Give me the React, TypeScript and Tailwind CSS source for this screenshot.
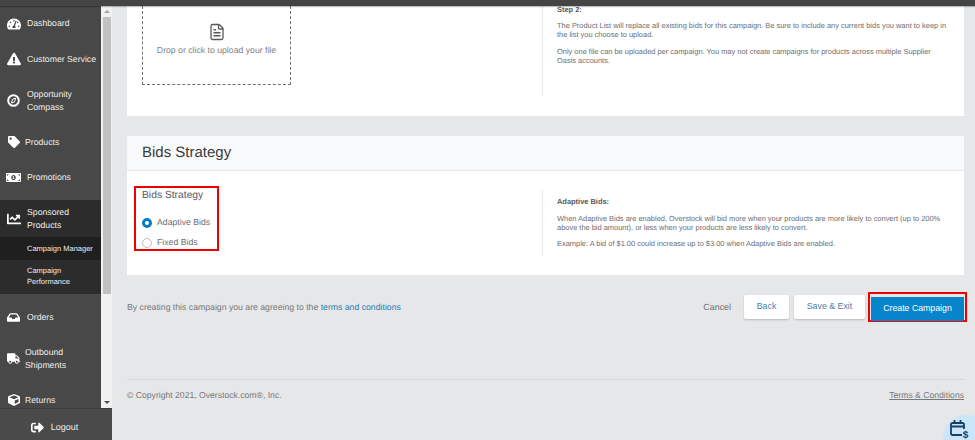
import React from "react";
import { FaTachometerAlt, FaExclamationTriangle, FaTag, FaMoneyBillAlt, FaChartLine, FaInbox, FaTruck, FaCube, FaSignOutAlt } from "react-icons/fa";
import { FileText } from "lucide-react";

function CompassIcon() {
  return (
    <svg width="13" height="13" viewBox="0 0 13 13" fill="none">
      <circle cx="6.5" cy="6.5" r="5.3" stroke="white" strokeWidth="2" />
      <path d="M8.6 4.2 7.6 7.8 4.5 9 5.4 5.3Z" stroke="white" strokeWidth="1" />
    </svg>
  );
}

function NavItem({ icon, label, h, gap = "gap-[6px]", pl = "pl-[6px]" }: { icon: React.ReactNode; label: React.ReactNode; h: string; gap?: string; pl?: string }) {
  return (
    <div className={`flex items-center ${h} ${gap} ${pl} whitespace-nowrap text-[8.7px] leading-[12.5px] text-[#eeeeee]`}>
      <span className="flex w-[15px] shrink-0 justify-center text-white">{icon}</span>
      <span>{label}</span>
    </div>
  );
}

function Sidebar() {
  return (
    <aside className="flex w-[112px] shrink-0 flex-col bg-[#4a4a4a]">
      <div className="flex h-[402px] min-h-0">
        <nav className="w-[101px] overflow-hidden bg-[#484848]">
          <NavItem h="h-[35px]" icon={<FaTachometerAlt size={14} />} label="Dashboard" />
          <NavItem h="h-[36px]" icon={<FaExclamationTriangle size={14} />} label="Customer Service" />
          <NavItem h="h-[47px]" icon={<CompassIcon />} label={<>Opportunity<br />Compass</>} />
          <NavItem h="h-[36px]" gap="gap-[4px]" icon={<FaTag size={12} />} label="Products" />
          <NavItem h="h-[40px] pb-[6px]" icon={<FaMoneyBillAlt size={15} />} label="Promotions" />
          <div className="h-[94px] bg-[#2c2c2c]">
            <NavItem h="h-[37px]" icon={<FaChartLine size={14} />} label={<>Sponsored<br />Products</>} />
            <div className="flex h-[23px] items-center whitespace-nowrap bg-[#1f1f1f] pl-[27px] text-[7.5px] text-[#eeeeee]">Campaign Manager</div>
            <div className="pl-[27px] pt-[6px] text-[7.5px] leading-[10.5px] text-[#eeeeee]">Campaign<br />Performance</div>
          </div>
          <NavItem h="h-[46px]" icon={<FaInbox size={13} />} label="Orders" />
          <NavItem h="h-[37px]" gap="gap-[4px]" icon={<FaTruck size={13} />} label={<>Outbound<br />Shipments</>} />
          <NavItem h="h-[46px]" gap="gap-[4px]" icon={<FaCube size={12} />} label="Returns" />
        </nav>
        <div className="flex w-[11px] flex-col items-center bg-[#f1f1f1]">
          <span className="mt-[4px] h-0 w-0 border-x-[3px] border-b-[3px] border-x-transparent border-b-[#a3a3a3]" />
          <div className="mt-[4px] h-[277px] w-[8px] bg-[#c1c1c1]" />
          <span className="mb-[4px] mt-auto h-0 w-0 border-x-[3px] border-t-[3px] border-x-transparent border-t-[#505050]" />
        </div>
      </div>
      <div className="flex flex-1 items-center justify-center gap-[7px] border-t border-[#3d3d3d] pr-[3px] pt-[6px] text-[9px] text-[#eeeeee]">
        <FaSignOutAlt size={13} className="text-white" />
        <span>Logout</span>
      </div>
    </aside>
  );
}

function Main() {
  return (
    <main className="relative min-w-0 flex-1 overflow-hidden bg-[#e6e7e8] pl-[15px] pr-[11px]">
      <section className="flex h-[110px] bg-white pl-[15px]">
        <div className="flex h-[79px] w-[149px] flex-col items-center border-x border-b border-dashed border-[#6d6e71] pt-[17px]">
          <FileText size={18} strokeWidth={1.7} className="text-[#58595b]" />
          <p className="mt-[3px] text-[8.7px] leading-[12px] text-[#808285]">Drop or click to upload your file</p>
        </div>
        <div className="ml-[251px] h-[90px] w-[408px] border-l border-[#e6e7e8] pl-[14px] text-[7.45px] leading-[9.5px] text-[#6d6e71]">
          <p className="-mt-px font-bold text-[#58595b]">Step 2:</p>
          <p className="mt-[6px]">The Product List will replace all existing bids for this campaign. Be sure to include any current bids you want to keep in the list you choose to upload.</p>
          <p className="mt-[7px]">Only one file can be uploaded per campaign. You may not create campaigns for products across multiple Supplier Oasis accounts.</p>
        </div>
      </section>

      <section className="mt-[20px] h-[139px] bg-white">
        <h2 className="flex h-[35px] items-center border-b border-[#e6e7e8] bg-[#f8f9fa] pl-[15px] pt-px text-[15px] text-[#3a3b3d]">Bids Strategy</h2>
        <div className="flex pl-[7px] pt-[15px]">
          <div className="h-[65px] w-[85px] border-2 border-[#f00000] pl-[6px] pt-px text-[8.7px] text-[#6d6e71]">
            <p className="text-[10.3px] leading-[14px] text-[#58595b]">Bids Strategy</p>
            <div className="mt-[13px] flex items-center gap-[5px]">
              <span className="h-[10px] w-[10px] rounded-full border-[3px] border-[#0b7cc4] bg-white" />
              <span>Adaptive Bids</span>
            </div>
            <div className="mt-[7px] flex items-center gap-[5px]">
              <span className="h-[10px] w-[10px] rounded-full border border-[#bcbec0] bg-white" />
              <span>Fixed Bids</span>
            </div>
          </div>
          <div className="ml-[323px] mt-[4px] h-[66px] w-[412px] border-l border-[#e6e7e8] pl-[14px] pt-[1px] text-[7.45px] leading-[9.5px] text-[#6d6e71]">
            <p className="mt-[6px] font-bold text-[#58595b]">Adaptive Bids:</p>
            <p className="mt-[7px]">When Adaptive Bids are enabled, Overstock will bid more when your products are more likely to convert (up to 200% above the bid amount), or less when your products are less likely to convert.</p>
            <p className="mt-[6.5px]">Example: A bid of $1.00 could increase up to $3.00 when Adaptive Bids are enabled.</p>
          </div>
        </div>
      </section>

      <div className="mt-[17px] flex h-[30px] items-center">
        <p className="pt-[2px] text-[8.7px] text-[#77787b]">By creating this campaign you are agreeing to the <span className="text-[#2a7ab5]">terms and conditions</span></p>
        <span className="ml-auto pt-[2px] text-[8.9px] text-[#6d6e71]">Cancel</span>
        <button className="ml-[13px] h-[24px] w-[45px] rounded-[2px] bg-white text-[8.8px] text-[#4a80ab] shadow-[0_1px_2px_rgba(0,0,0,0.2)]">Back</button>
        <button className="ml-[5px] h-[24px] w-[71px] rounded-[2px] bg-white text-[8.8px] text-[#4a80ab] shadow-[0_1px_2px_rgba(0,0,0,0.2)]">Save &amp; Exit</button>
        <div className="-mr-[3px] ml-[3px] h-[30px] w-[99px] border-2 border-[#f00000] p-px">
          <button className="h-full w-full bg-[#0784cc] text-[8.75px] text-white">Create Campaign</button>
        </div>
      </div>

      <div className="mt-[57px] flex h-[30px] items-center border-t border-[#d5d6d8] pt-[1px] text-[8.65px] text-[#77787b]">
        <p>© Copyright 2021, Overstock.com®, Inc.</p>
        <a className="ml-auto underline">Terms &amp; Conditions</a>
      </div>

      <div className="absolute right-[-16px] top-[409px] flex h-[48px] w-[48px] items-start rounded-full bg-[#cbe5f9] pl-[7px] pt-[5px]">
        <svg width="19" height="21" viewBox="0 0 19 21" fill="none">
          <path d="M12 15H2.5a1.5 1.5 0 0 1-1.5-1.5V4.5A1.5 1.5 0 0 1 2.5 3h10A1.5 1.5 0 0 1 14 4.5V9" stroke="#14406e" strokeWidth="1.8" />
          <path d="M1 6.5h13M4.5 0v3.5M10.5 0v3.5" stroke="#14406e" strokeWidth="1.8" />
          <text x="12.8" y="18" fontSize="10" fontWeight="700" fill="#14406e">$</text>
        </svg>
      </div>
    </main>
  );
}

export default function App() {
  return (
    <div className="flex h-[440px] w-[975px] flex-col overflow-hidden [text-rendering:geometricPrecision]" style={{ fontFamily: '"Liberation Sans", Arial, sans-serif' }}>
      <header className="z-10 h-[6px] shrink-0 bg-[#444444] shadow-[0_1px_1px_rgba(0,0,0,0.25)]" />
      <div className="flex min-h-0 flex-1">
        <Sidebar />
        <Main />
      </div>
    </div>
  );
}
